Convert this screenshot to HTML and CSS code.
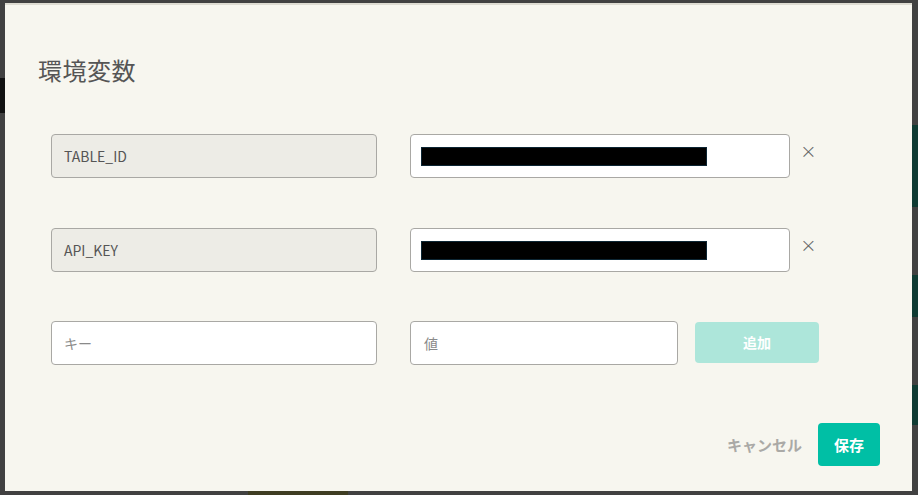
FILE: index.html
```html
<!DOCTYPE html>
<html lang="ja">
<head>
<meta charset="utf-8">
<link rel="stylesheet" href="styles.css">
</head>
<body>
<div class="backdrop">
  <div class="bg-bar bg-left"></div>
  <div class="bg-bar bg-right1"></div>
  <div class="bg-bar bg-right2"></div>
  <div class="bg-bar bg-right3"></div>
  <div class="bg-bar bg-bottom"></div>
  <div class="modal">
    <h1 class="title">環境変数</h1>
    <div class="rows">
      <div class="row">
        <div class="field key readonly">TABLE_ID</div>
        <div class="field value"><span class="redact"></span></div>
        <span class="remove">×</span>
      </div>
      <div class="row">
        <div class="field key readonly">API_KEY</div>
        <div class="field value"><span class="redact"></span></div>
        <span class="remove">×</span>
      </div>
      <div class="row">
        <div class="field key placeholder">キー</div>
        <div class="field value short placeholder">値</div>
        <button class="add">追加</button>
      </div>
    </div>
    <div class="footer">
      <button class="cancel">キャンセル</button>
      <button class="save">保存</button>
    </div>
  </div>
</div>
</body>
</html>
```
FILE: styles.css
```css
* { box-sizing: border-box; }
html, body {
  margin: 0;
  padding: 0;
  width: 918px;
  height: 495px;
  overflow: hidden;
  background: #414141;
  font-family: "Noto Sans CJK JP", "Noto Sans", sans-serif;
}
.backdrop {
  position: relative;
  width: 918px;
  height: 495px;
  padding: 3px 6px 4px 5px;
}
.bg-bar { position: absolute; }
.bg-left { left: 0; top: 78px; width: 5px; height: 35px; background: #111; }
.bg-right1 { right: 0; top: 125px; width: 6px; height: 82px; background: #0f3b33; }
.bg-right2 { right: 0; top: 275px; width: 6px; height: 42px; background: #0f3b33; }
.bg-right3 { right: 0; top: 385px; width: 6px; height: 40px; background: #0f3b33; }
.bg-bottom { left: 248px; bottom: 0; width: 100px; height: 4px; background: #3f3d22; }
.modal {
  position: relative;
  height: 488px;
  background: #f7f6ef;
  border-top: 2px solid #dedcd2;
  padding: 0 0 0 33px;
  display: flex;
  flex-direction: column;
}
.title {
  margin: 47px 0 0 0;
  font-size: 24px;
  font-weight: 400;
  color: #555;
  line-height: 36px;
  letter-spacing: 0.5px;
}
.rows {
  margin-top: 46px;
  padding-left: 13px;
  display: flex;
  flex-direction: column;
  gap: 50px;
}
.row {
  display: flex;
  align-items: center;
  height: 44px;
}
.row + .row + .row { margin-top: -1px; }
.field {
  height: 44px;
  border: 1px solid #a9a8a4;
  border-radius: 4px;
  background: #fff;
  font-size: 14px;
  color: #555;
  display: flex;
  align-items: center;
  padding-left: 12px;
}
.key { width: 326px; }
.readonly { background: #edece6; }
.value { width: 380px; margin-left: 33px; padding-left: 10px; }
.value.short { width: 268px; padding-left: 13px; }
.placeholder { color: #8a8a8a; font-size: 14px; }
.redact {
  display: block;
  width: 286px;
  height: 19px;
  background: #000;
  border: 1px solid #0c2533;
}
.remove {
  margin-left: 10px;
  margin-top: -10px;
  font-size: 20px;
  color: #666;
  font-family: "DejaVu Sans", sans-serif;
  font-weight: 300;
  line-height: 1;
}
.add {
  margin-left: 17px;
  margin-top: -2px;
  width: 124px;
  height: 41px;
  border: none;
  border-radius: 4px;
  background: #ade6da;
  color: #fff;
  font-family: inherit;
  font-size: 14px;
  font-weight: 700;
}
.footer {
  margin-top: auto;
  margin-bottom: 25px;
  padding-right: 32px;
  display: flex;
  justify-content: flex-end;
  align-items: center;
  gap: 16px;
}
.cancel {
  border: none;
  background: transparent;
  color: #aaa9a6;
  font-family: inherit;
  font-size: 15px;
  font-weight: 700;
  padding: 0;
}
.save {
  width: 62px;
  height: 43px;
  border: none;
  border-radius: 4px;
  background: #00bfa5;
  color: #fff;
  font-family: inherit;
  font-size: 15px;
  font-weight: 700;
}
```
